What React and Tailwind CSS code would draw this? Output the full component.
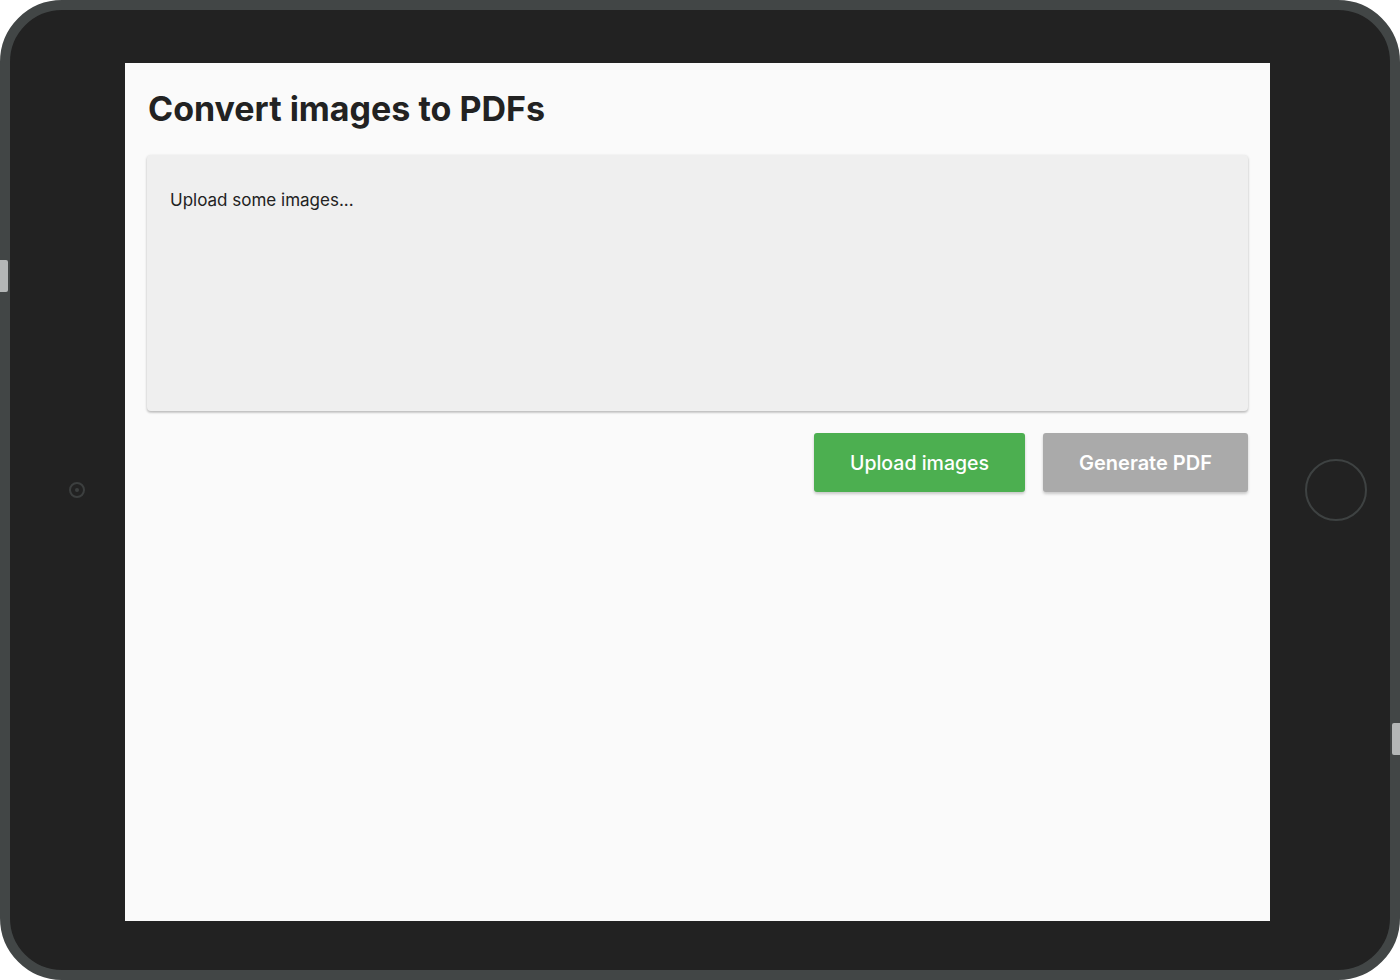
export default function App() {
  return (
    <div className="w-[1400px] h-[980px] bg-white font-['Inter',sans-serif]">
      {/* Tablet frame */}
      <div className="relative w-[1400px] h-[980px] rounded-[62px] border-[10px] border-[#424646] bg-[#222222] flex">
        {/* Side buttons */}
        <div className="absolute -left-[10px] top-[250px] w-[8px] h-[32px] bg-[#b4b7b7] rounded-r-[2px]" />
        <div className="absolute -right-[10px] top-[713px] w-[8px] h-[32px] bg-[#b4b7b7] rounded-l-[2px]" />

        {/* Left bezel with camera */}
        <div className="w-[115px] flex items-center justify-center pl-[18px]">
          <div className="w-[16px] h-[16px] rounded-full border-[2px] border-[#3c3f3f] flex items-center justify-center">
            <div className="w-[4px] h-[4px] rounded-full bg-[#3c3f3f]" />
          </div>
        </div>

        {/* Screen */}
        <div className="mt-[53px] w-[1145px] h-[858px] bg-[#fafafa] px-[22px] pt-[26px]">
          <h1 className="text-[34px] leading-[40px] font-bold text-[#222222] tracking-[0px] pl-[1px]">
            Convert images to PDFs
          </h1>

          <div className="mt-[26px] h-[256px] rounded-[4px] bg-[#efefef] shadow-[0_1px_3px_rgba(0,0,0,0.2),0_2px_2px_rgba(0,0,0,0.1)] px-[23px] pt-[34px]">
            <p className="text-[17px] leading-[22px] text-[#222222]">Upload some images...</p>
          </div>

          <div className="mt-[22px] flex justify-end gap-[18px]">
            <button className="w-[211px] h-[59px] rounded-[3px] bg-[#4caf50] text-white text-[19.5px] font-medium shadow-[0_2px_3px_rgba(0,0,0,0.2)] pt-[2px]">
              Upload images
            </button>
            <button className="w-[205px] h-[59px] rounded-[3px] bg-[#aaaaaa] text-white text-[20px] font-semibold shadow-[0_2px_3px_rgba(0,0,0,0.2)]">
              Generate PDF
            </button>
          </div>
        </div>

        {/* Right bezel with home button */}
        <div className="flex-1 flex items-center justify-center pl-[12px]">
          <div className="w-[62px] h-[62px] rounded-full border-[2px] border-[#3e4242]" />
        </div>
      </div>
    </div>
  );
}
